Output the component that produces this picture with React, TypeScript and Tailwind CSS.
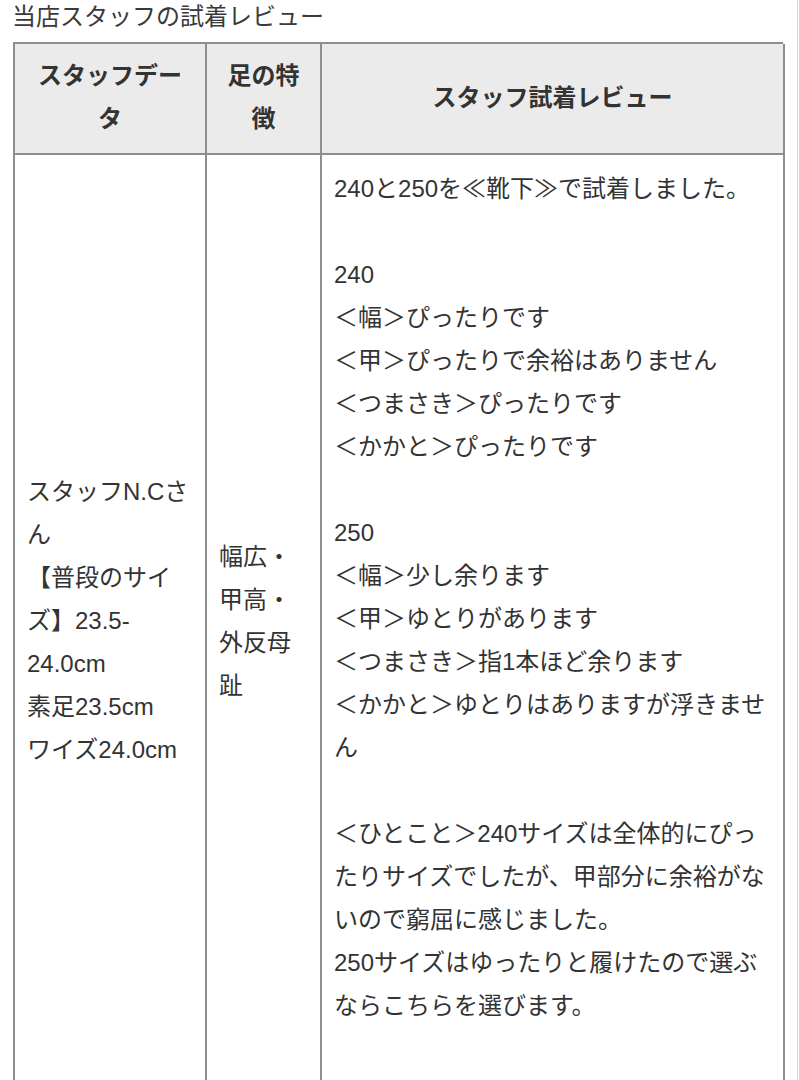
const reviewLines = [
  "240と250を≪靴下≫で試着しました。",
  "",
  "240",
  "＜幅＞ぴったりです",
  "＜甲＞ぴったりで余裕はありません",
  "＜つまさき＞ぴったりです",
  "＜かかと＞ぴったりです",
  "",
  "250",
  "＜幅＞少し余ります",
  "＜甲＞ゆとりがあります",
  "＜つまさき＞指1本ほど余ります",
  "＜かかと＞ゆとりはありますが浮きません",
  "",
  "＜ひとこと＞240サイズは全体的にぴったりサイズでしたが、甲部分に余裕がないので窮屈に感じました。",
  "250サイズはゆったりと履けたので選ぶならこちらを選びます。",
  "",
];

export default function App() {
  return (
    <div
      className="w-[798px] min-h-[1080px] bg-white border-r border-[#d4d4d4] text-[#333] text-[24px] leading-[43px]"
      style={{ fontFamily: '"Liberation Sans", "Noto Sans CJK JP", sans-serif' }}
    >
      <h2 className="pl-3 leading-[34px] mb-2 text-[#3a3a3a]">当店スタッフの試着レビュー</h2>

      <div className="ml-[13px] w-[770px] grid grid-cols-[192px_115px_463px] border-l-2 border-t-2 border-[#8e8e8e]">
        {/* header */}
        <div className="bg-[#ebebeb] border-r-2 border-b-2 border-[#8e8e8e] px-3 pt-[10px] pb-[13px] font-bold text-center">
          スタッフデータ
        </div>
        <div className="bg-[#ebebeb] border-r-2 border-b-2 border-[#8e8e8e] px-3 pt-[10px] pb-[13px] font-bold text-center">
          足の特徴
        </div>
        <div className="bg-[#ebebeb] border-r-2 border-b-2 border-[#8e8e8e] px-3 pt-[10px] pb-[13px] font-bold flex items-center justify-center">
          スタッフ試着レビュー
        </div>

        {/* body */}
        <div className="border-r-2 border-b-2 border-[#8e8e8e] px-3 py-3 flex items-center">
          <p>
            スタッフN.Cさん
            <br />
            【普段のサイズ】23.5-24.0cm
            <br />
            素足23.5cm
            <br />
            ワイズ24.0cm
          </p>
        </div>
        <div className="border-r-2 border-b-2 border-[#8e8e8e] px-3 py-3 flex items-center">
          <p>幅広・甲高・外反母趾</p>
        </div>
        <div className="border-r-2 border-b-2 border-[#8e8e8e] px-3 pt-3 pb-4">
          {reviewLines.map((line, i) => (
            <p key={i} className="min-h-[43px]">
              {line}
            </p>
          ))}
        </div>
      </div>
    </div>
  );
}
